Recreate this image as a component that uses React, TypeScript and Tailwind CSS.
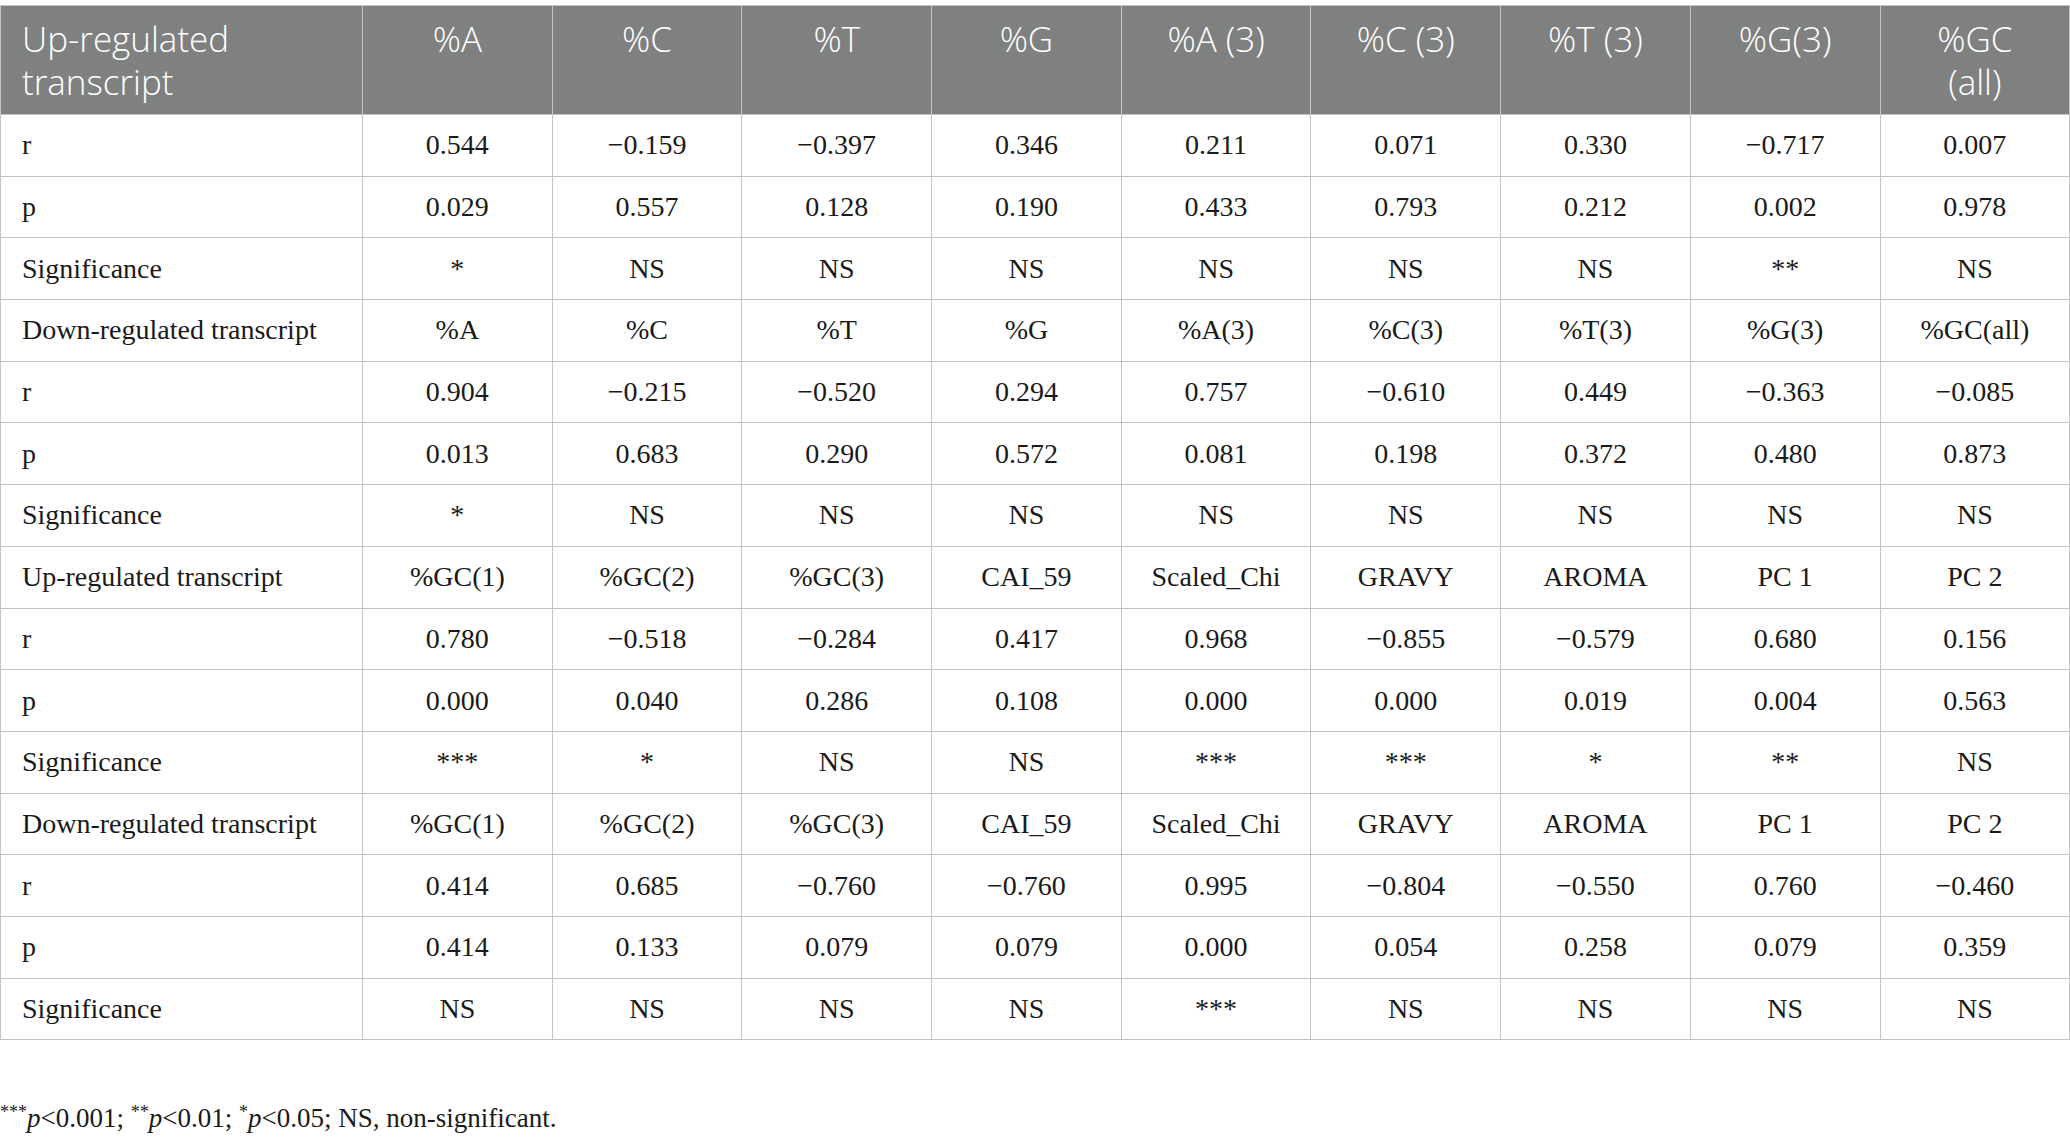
import React from 'react';

const headers = ['%A', '%C', '%T', '%G', '%A (3)', '%C (3)', '%T (3)', '%G(3)', '%GC (all)'];

const rows: string[][] = [
  ['r', '0.544', '\u22120.159', '\u22120.397', '0.346', '0.211', '0.071', '0.330', '\u22120.717', '0.007'],
  ['p', '0.029', '0.557', '0.128', '0.190', '0.433', '0.793', '0.212', '0.002', '0.978'],
  ['Significance', '*', 'NS', 'NS', 'NS', 'NS', 'NS', 'NS', '**', 'NS'],
  ['Down-regulated transcript', '%A', '%C', '%T', '%G', '%A(3)', '%C(3)', '%T(3)', '%G(3)', '%GC(all)'],
  ['r', '0.904', '\u22120.215', '\u22120.520', '0.294', '0.757', '\u22120.610', '0.449', '\u22120.363', '\u22120.085'],
  ['p', '0.013', '0.683', '0.290', '0.572', '0.081', '0.198', '0.372', '0.480', '0.873'],
  ['Significance', '*', 'NS', 'NS', 'NS', 'NS', 'NS', 'NS', 'NS', 'NS'],
  ['Up-regulated transcript', '%GC(1)', '%GC(2)', '%GC(3)', 'CAI_59', 'Scaled_Chi', 'GRAVY', 'AROMA', 'PC 1', 'PC 2'],
  ['r', '0.780', '\u22120.518', '\u22120.284', '0.417', '0.968', '\u22120.855', '\u22120.579', '0.680', '0.156'],
  ['p', '0.000', '0.040', '0.286', '0.108', '0.000', '0.000', '0.019', '0.004', '0.563'],
  ['Significance', '***', '*', 'NS', 'NS', '***', '***', '*', '**', 'NS'],
  ['Down-regulated transcript', '%GC(1)', '%GC(2)', '%GC(3)', 'CAI_59', 'Scaled_Chi', 'GRAVY', 'AROMA', 'PC 1', 'PC 2'],
  ['r', '0.414', '0.685', '\u22120.760', '\u22120.760', '0.995', '\u22120.804', '\u22120.550', '0.760', '\u22120.460'],
  ['p', '0.414', '0.133', '0.079', '0.079', '0.000', '0.054', '0.258', '0.079', '0.359'],
  ['Significance', 'NS', 'NS', 'NS', 'NS', '***', 'NS', 'NS', 'NS', 'NS'],
];

export default function App() {
  return (
    <div className="w-[2070px] h-[1145px] bg-white pt-[5px]">
      <table className="table-fixed border-collapse w-[2069px] font-['Liberation_Serif',serif] text-[#1a1a1a]">
        <colgroup>
          <col className="w-[362px]" />
          {headers.map((h) => (
            <col key={h} className="w-[189.7px]" />
          ))}
        </colgroup>
        <thead>
          <tr className="h-[109px] bg-[#7f8180] text-white font-['Open_Sans',sans-serif] font-light text-[35px] leading-[43px]">
            <th className="border border-[#c4c4c4] align-top text-left font-light pl-[21px] pt-[11px]">
              Up-regulated
              <br />
              transcript
            </th>
            {headers.map((h) => (
              <th key={h} className="border border-[#c4c4c4] align-top text-center font-light pt-[11px] px-[16px]">
                {h === '%GC (all)' ? (
                  <>
                    %GC
                    <br />
                    (all)
                  </>
                ) : (
                  h
                )}
              </th>
            ))}
          </tr>
        </thead>
        <tbody className="text-[28px]">
          {rows.map((r, i) => (
            <tr key={i} className="h-[61.7px]">
              {r.map((c, j) => (
                <td
                  key={j}
                  className={
                    j === 0
                      ? 'border border-[#c4c4c4] pl-[21px] text-left whitespace-nowrap'
                      : 'border border-[#c4c4c4] text-center whitespace-nowrap'
                  }
                >
                  {c}
                </td>
              ))}
            </tr>
          ))}
        </tbody>
      </table>
      <p className="mt-[58px] font-['Liberation_Serif',serif] text-[27px] text-[#1a1a1a]">
        <sup className="text-[18px]">***</sup>
        <i>p</i>&lt;0.001; <sup className="text-[18px]">**</sup>
        <i>p</i>&lt;0.01; <sup className="text-[18px]">*</sup>
        <i>p</i>&lt;0.05; NS, non-significant.
      </p>
    </div>
  );
}
